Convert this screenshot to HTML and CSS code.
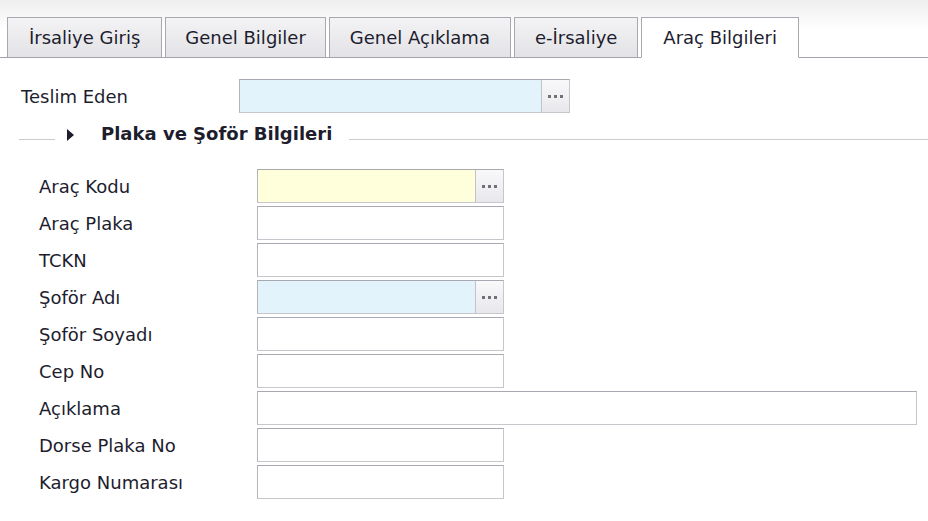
FILE: index.html
```html
<!DOCTYPE html>
<html lang="tr">
<head>
<meta charset="utf-8">
<title>Araç Bilgileri</title>
<link rel="stylesheet" href="styles.css">
</head>
<body>
<div class="tabbar">
  <div class="tab tab-first">İrsaliye Giriş</div>
  <div class="tab tab-narrow">Genel Bilgiler</div>
  <div class="tab">Genel Açıklama</div>
  <div class="tab">e-İrsaliye</div>
  <div class="tab active">Araç Bilgileri</div>
</div>

<div class="content">
  <div class="row top-row">
    <div class="label top-label">Teslim Eden</div>
    <div class="lookup blue wide-lookup">
      <div class="lookup-input"></div>
      <div class="lookup-btn"><svg width="15" height="3" viewBox="0 0 15 3"><rect x="0" y="0" width="3" height="3"/><rect x="6" y="0" width="3" height="3"/><rect x="12" y="0" width="3" height="3"/></svg></div>
    </div>
  </div>

  <div class="group-head">
    <div class="rule rule-left"></div>
    <div class="legend">
      <span class="caret"></span>
      <span class="legend-text">Plaka ve Şoför Bilgileri</span>
    </div>
    <div class="rule rule-right"></div>
  </div>

  <div class="rows">
    <div class="row">
      <div class="label">Araç Kodu</div>
      <div class="lookup yellow">
        <div class="lookup-input"></div>
        <div class="lookup-btn"><svg width="15" height="3" viewBox="0 0 15 3"><rect x="0" y="0" width="3" height="3"/><rect x="6" y="0" width="3" height="3"/><rect x="12" y="0" width="3" height="3"/></svg></div>
      </div>
    </div>
    <div class="row">
      <div class="label">Araç Plaka</div>
      <div class="box"></div>
    </div>
    <div class="row">
      <div class="label">TCKN</div>
      <div class="box"></div>
    </div>
    <div class="row">
      <div class="label">Şoför Adı</div>
      <div class="lookup blue">
        <div class="lookup-input"></div>
        <div class="lookup-btn"><svg width="15" height="3" viewBox="0 0 15 3"><rect x="0" y="0" width="3" height="3"/><rect x="6" y="0" width="3" height="3"/><rect x="12" y="0" width="3" height="3"/></svg></div>
      </div>
    </div>
    <div class="row">
      <div class="label">Şoför Soyadı</div>
      <div class="box"></div>
    </div>
    <div class="row">
      <div class="label">Cep No</div>
      <div class="box"></div>
    </div>
    <div class="row">
      <div class="label">Açıklama</div>
      <div class="box box-wide"></div>
    </div>
    <div class="row">
      <div class="label">Dorse Plaka No</div>
      <div class="box"></div>
    </div>
    <div class="row">
      <div class="label">Kargo Numarası</div>
      <div class="box"></div>
    </div>
  </div>
</div>
</body>
</html>
```

FILE: styles.css
```css
* { box-sizing: border-box; }

body {
  margin: 0;
  background: #ffffff;
  font-family: "DejaVu Sans", Verdana, sans-serif;
  font-size: 18px;
  color: #1d1d2e;
}

.tabbar {
  display: flex;
  align-items: flex-end;
  gap: 3px;
  height: 58px;
  padding: 17px 0 0 7px;
  background: linear-gradient(#eeeeee 0px, #ffffff 30px);
  border-bottom: 1px solid #a3a3ab;
}

.tab {
  height: 41px;
  padding: 0 20px;
  display: flex;
  align-items: center;
  justify-content: center;
  border: 1px solid #a8a8b0;
  background: linear-gradient(#f3f3f5, #e3e3e7);
  white-space: nowrap;
  margin-bottom: -1px;
  border-bottom-color: #a3a3ab;
}

.tab-first {
  padding: 0 21px;
}

.tab-narrow {
  padding: 0 19px;
}

.tab.active {
  background: #ffffff;
  border-bottom-color: #ffffff;
  padding: 0 21px;
}

.content {
  padding-top: 21px;
}

.row {
  display: flex;
  align-items: center;
  height: 34px;
}

.top-row {
  padding-left: 21px;
}

.label {
  width: 218px;
  flex: none;
  white-space: nowrap;
}

.lookup {
  display: flex;
  height: 34px;
  width: 247px;
  border: 1px solid #c6c6cc;
  border-top-color: #a8a8b0;
  border-left-color: #b4b4bc;
}

.wide-lookup {
  width: 331px;
}

.lookup-input {
  flex: 1;
}

.yellow .lookup-input { background: #ffffdc; }
.blue .lookup-input { background: #e2f3fc; }

.lookup-btn {
  width: 28px;
  flex: none;
  display: flex;
  align-items: center;
  justify-content: center;
  border-left: 1px solid #c2c2c8;
  background: linear-gradient(#f9f9fa, #e8e8ec);
}

.lookup-btn svg { fill: #707076; }

.box {
  width: 247px;
  height: 34px;
  background: #ffffff;
  border: 1px solid #c6c6cc;
  border-top-color: #a8a8b0;
  border-left-color: #b4b4bc;
}

.box-wide {
  width: 660px;
}

.group-head {
  display: flex;
  align-items: flex-end;
  height: 24px;
  margin: 8px 0 0 19px;
}

.rule {
  height: 1px;
  background: #cbcbcf;
  margin-bottom: 5px;
}

.rule-left { width: 36px; }
.rule-right { flex: 1; }

.legend {
  display: flex;
  align-items: center;
  height: 24px;
  padding: 0 17px 0 12px;
}

.caret {
  width: 0;
  height: 0;
  border-top: 6px solid transparent;
  border-bottom: 6px solid transparent;
  border-left: 7px solid #1d1d2e;
  margin: 4px 27px 0 0;
}

.legend-text {
  font-weight: bold;
  white-space: nowrap;
}

.rows {
  display: flex;
  flex-direction: column;
  gap: 3px;
  margin-top: 24px;
  padding-left: 39px;
}
```
